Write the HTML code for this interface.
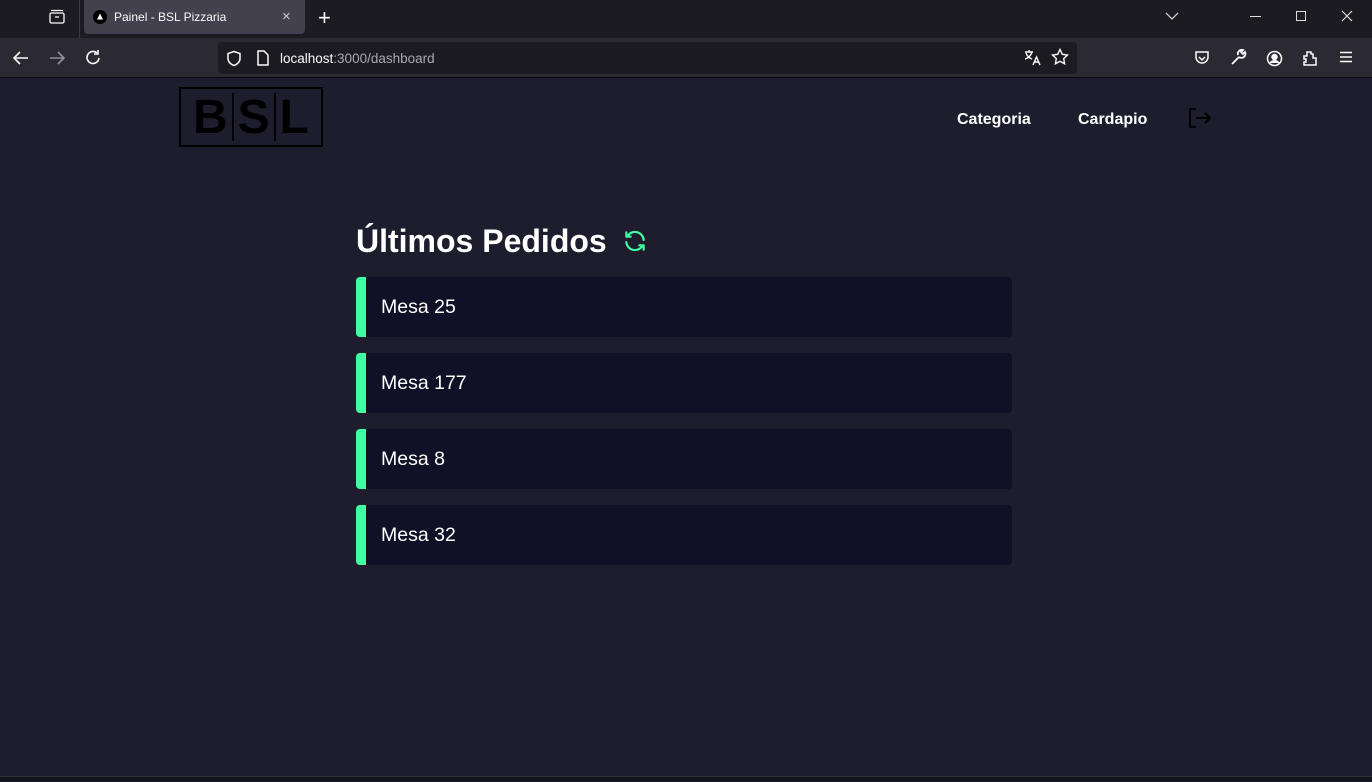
<!DOCTYPE html>
<html><head><meta charset="utf-8"><style>
*{margin:0;padding:0;box-sizing:border-box}
body{width:1372px;height:782px;overflow:hidden;background:#1d1d2e;font-family:"Liberation Sans",sans-serif;position:relative}
.tabs{position:absolute;top:0;left:0;width:1372px;height:38px;background:#1c1b22}
.tab{position:absolute;left:84px;top:0;width:221px;height:34px;background:#42414d;border-radius:0 0 4px 4px;color:#fbfbfe;font-size:12px}
.toolbar{position:absolute;top:38px;left:0;width:1372px;height:40px;background:#2b2a33;border-bottom:1px solid #0c0c0d}
.url{position:absolute;left:218px;top:4px;width:859px;height:32px;background:#1c1b22;border-radius:4px;color:#fbfbfe;font-size:13.5px}
svg{position:absolute}
.logo{position:absolute;left:179px;top:87px;width:144px;height:60px;border:2px solid #000;color:#000;font-size:48px;font-weight:bold;font-family:"Liberation Sans",sans-serif;display:flex;align-items:center;justify-content:center}
.nav{position:absolute;top:111px;color:#fff;font-weight:bold;font-size:16px}
h1{position:absolute;left:356px;top:223px;color:#fff;font-size:32px;font-weight:bold}
.card{position:absolute;left:356px;width:656px;height:60px;background:#101026;border-radius:4px;border-left:10px solid #3fffa3;color:#fff;font-size:19.5px;padding-left:15px;line-height:61px}
.bottom{position:absolute;top:776px;left:0;width:1372px;height:6px;background:#141420;border-top:1px solid #333}
</style></head><body>
<div class="tabs">
<svg style="left:48px;top:9px" width="18" height="16" viewBox="0 0 18 16" fill="none" stroke="#fbfbfe" stroke-width="1.3"><rect x="2" y="4" width="14" height="10" rx="1.5"/><path d="M3 1.5h12M7 8h4"/></svg>
<div style="position:absolute;left:79px;top:0;width:1px;height:38px;background:#3a3944"></div>
<div class="tab"><svg style="left:9px;top:10px" width="14" height="14"><circle cx="7" cy="7" r="7" fill="#000"/><path d="M7 3.5L10 9.5H4Z" fill="#fff"/></svg><span style="position:absolute;left:30px;top:10px">Painel - BSL Pizzaria</span><span style="position:absolute;left:198px;top:8px;font-size:15px;color:#ccc">×</span></div>
<span style="position:absolute;left:318px;top:5px;color:#fbfbfe;font-size:22px">+</span>
<svg style="left:1165px;top:11px" width="14" height="10" fill="none" stroke="#ccc" stroke-width="1.3"><path d="M1 2l6 6 6-6"/></svg>
<div style="position:absolute;left:1250px;top:16px;width:11px;height:1px;background:#ddd"></div>
<div style="position:absolute;left:1296px;top:11px;width:10px;height:10px;border:1px solid #ddd"></div>
<svg style="left:1341px;top:10px" width="12" height="12" stroke="#ddd" stroke-width="1.2"><path d="M1 1l10 10M11 1L1 11"/></svg>
</div>
<div class="toolbar">
<svg style="left:12px;top:12px" width="18" height="16" fill="none" stroke="#fbfbfe" stroke-width="1.6"><path d="M16 8H2M8 2L2 8l6 6"/></svg>
<svg style="left:48px;top:12px" width="18" height="16" fill="none" stroke="#8f8f9d" stroke-width="1.6"><path d="M2 8h14M10 2l6 6-6 6"/></svg>
<svg style="left:85px;top:11px" width="17" height="17" fill="none" stroke="#fbfbfe" stroke-width="1.6"><path d="M14 9a6 6 0 1 1-2-5"/><path d="M13 1v4H9" /></svg>
<div class="url">
<svg style="left:8px;top:8px" width="16" height="17" fill="none" stroke="#fbfbfe" stroke-width="1.5"><path d="M8 1.5l6 2v5c0 3.5-3 6-6 7-3-1-6-3.5-6-7v-5z"/></svg>
<svg style="left:38px;top:8px" width="14" height="17" fill="none" stroke="#fbfbfe" stroke-width="1.5"><path d="M2 1h6l4 4v10H2z"/></svg>
<span style="position:absolute;left:62px;top:9px">localhost<span style="color:#a8a8b3">:3000/dashboard</span></span>
<svg style="left:806px;top:7px" width="18" height="18" fill="none" stroke="#fbfbfe" stroke-width="1.4"><path d="M1 3h8M5 1v2M2 4c1 3 3 5 6 6M8 3c-1 3-3 6-7 7M9 16l3.5-8 3.5 8M10 13h5"/></svg>
<svg style="left:833px;top:6px" width="18" height="18" fill="none" stroke="#fbfbfe" stroke-width="1.4"><path d="M9 1.5l2.3 4.8 5.2.7-3.8 3.6.9 5.2L9 13.3l-4.6 2.5.9-5.2L1.5 7l5.2-.7z"/></svg>
</div>
<svg style="left:1194px;top:12px" width="16" height="16" fill="none" stroke="#fbfbfe" stroke-width="1.5"><path d="M2 2h12v5a6 6 0 0 1-12 0z"/><path d="M5 7l3 3 3-3"/></svg>
<svg style="left:1230px;top:11px" width="17" height="17" fill="none" stroke="#fbfbfe" stroke-width="1.8"><path d="M2 15l7-7M9 8a4 4 0 0 0 6-5l-2 2-2-2 2-2a4 4 0 0 0-5 5"/></svg>
<svg style="left:1266px;top:12px" width="17" height="17" fill="none" stroke="#fbfbfe" stroke-width="1.5"><circle cx="8.5" cy="8.5" r="7"/><circle cx="8.5" cy="7" r="2.5" fill="#fbfbfe"/><path d="M4 13c2-3 7-3 9 0" fill="#fbfbfe"/></svg>
<svg style="left:1302px;top:11px" width="17" height="18" fill="none" stroke="#fbfbfe" stroke-width="1.5"><path d="M2 7h3V3h4v2h2v4h3v7H2v-3h2v-3H2z"/></svg>
<svg style="left:1339px;top:13px" width="14" height="12" stroke="#fbfbfe" stroke-width="1.5"><path d="M1 1.5h12M1 6h12M1 10.5h12"/></svg>
</div>
<div class="logo"><span>B</span><span style="width:2px;height:48px;background:#000;margin:0 4px"></span><span>S</span><span style="width:2px;height:48px;background:#000;margin:0 4px"></span><span>L</span></div>
<div class="nav" style="left:957px">Categoria</div>
<div class="nav" style="left:1078px">Cardapio</div>
<svg style="left:1188px;top:107px" width="24" height="22" fill="none" stroke="#000" stroke-width="2"><path d="M8 2H2v18h6M8 11h14M17 6l5 5-5 5"/></svg>
<h1>Últimos Pedidos</h1>
<svg style="left:621px;top:228px" width="28" height="26" viewBox="0 0 24 24" fill="none" stroke="#3fffa3" stroke-width="2" stroke-linecap="round" stroke-linejoin="round"><path d="M20 11A8 8 0 0 0 5.5 7M4 4v4h4M4 13a8 8 0 0 0 14.5 4M20 20v-4h-4"/></svg>
<div class="card" style="top:277px">Mesa 25</div>
<div class="card" style="top:353px">Mesa 177</div>
<div class="card" style="top:429px">Mesa 8</div>
<div class="card" style="top:505px">Mesa 32</div>
<div class="bottom"></div>
</body></html>
